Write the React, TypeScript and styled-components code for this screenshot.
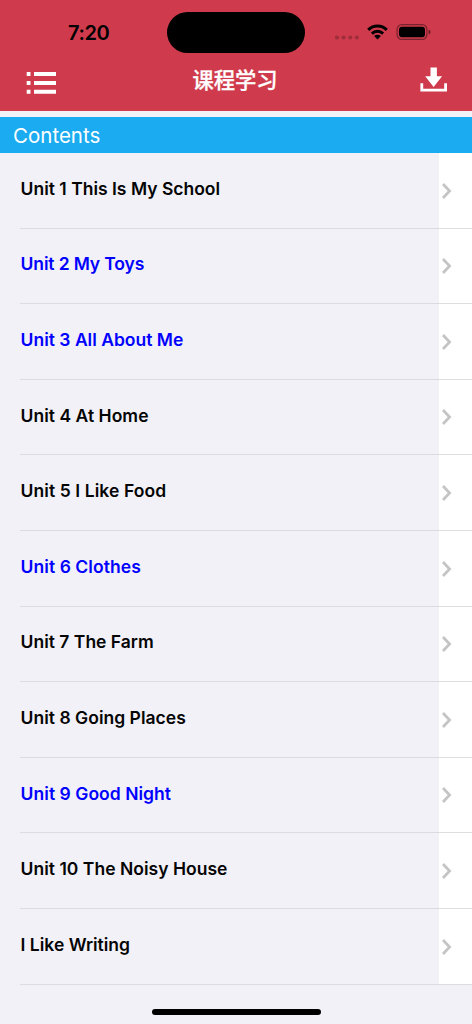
import React from 'react'
import styled, { createGlobalStyle } from 'styled-components'

interface Unit {
  title: string,
  active?: boolean,
  spacing?: number,
}

const units: Unit[] = [
  { title: 'Unit 1 This Is My School' },
  { title: 'Unit 2 My Toys', active: true, spacing: -0.14 },
  { title: 'Unit 3 All About Me', active: true },
  { title: 'Unit 4 At Home', spacing: 0.03 },
  { title: 'Unit 5 I Like Food', spacing: 0.08 },
  { title: 'Unit 6 Clothes', active: true, spacing: 0.06 },
  { title: 'Unit 7 The Farm' },
  { title: 'Unit 8 Going Places', spacing: 0.02 },
  { title: 'Unit 9 Good Night', active: true, spacing: 0.04 },
  { title: 'Unit 10 The Noisy House', spacing: 0.02 },
  { title: 'I Like Writing' },
]

const StatusIcons: React.FC = () => (
  <svg width="96" height="20" viewBox="335 22 96 20" fill="#000">
    <g opacity="0.22">
      <circle cx="337" cy="37.5" r="2.1" />
      <circle cx="343.6" cy="37.5" r="2.1" />
      <circle cx="350.3" cy="37.5" r="2.1" />
      <circle cx="356.9" cy="37.5" r="2.1" />
    </g>
    <g fill="none" stroke="#000" strokeWidth="3">
      <path d="M368.2 29.9a13.2 13.2 0 0 1 18.6 0" />
      <path d="M371.9 33.6a8 8 0 0 1 11.2 0" />
    </g>
    <path d="M377.5 39.4l-3.4-3.4a4.9 4.9 0 0 1 6.8 0z" />
    <rect x="397.1" y="24.6" width="29.8" height="14.8" rx="4.8" fill="none" stroke="#000" strokeOpacity="0.42" strokeWidth="1.2" />
    <rect x="399" y="26.7" width="26" height="10.6" rx="3" />
    <path d="M428.6 29.4c2.6 1 2.6 4.2 0 5.2z" opacity="0.5" />
  </svg>
)

const ListIcon: React.FC = () => (
  <svg width="30" height="22" viewBox="0 0 30 22" fill="#fff">
    <path d="M.7 0h3.8v4H.7zM8 0h22v4H8zM.7 9h3.8v4H.7zM8 9h22v4H8zM.7 17.8h3.8v4H.7zM8 17.8h22v4H8z" />
  </svg>
)

const DownloadIcon: React.FC = () => (
  <svg width="28" height="26" viewBox="420 67 28 26" fill="#fff">
    <path d="M430.5 67.4h6.4v8.8h5.2l-8.5 10.7-8.4-10.7h5.3z" />
    <path d="M420.4 83.2h2.8v5.5h21v-5.5h2.8v8.4h-26.6z" />
  </svg>
)

const Chevron: React.FC = () => (
  <svg width="10" height="16" viewBox="0 0 10 16" fill="none" stroke="#c4c4c6" strokeWidth="2.7">
    <path d="M1 1l6.6 7L1 15" />
  </svg>
)

const App: React.FC = () => {
  return (
    <>
      <GlobalStyle />
      <Screen>
        <Header>
          <StatusBar>
            <Time>7:20</Time>
            <Island />
            <StatusIcons />
          </StatusBar>
          <NavBar>
            <ListIcon />
            <NavTitle>课程学习</NavTitle>
            <DownloadIcon />
          </NavBar>
        </Header>
        <SectionTitle>Contents</SectionTitle>
        <UnitList>
          {units.map((unit) => (
            <UnitRow key={unit.title}>
              <UnitTitle $active={unit.active} $spacing={unit.spacing}>{unit.title}</UnitTitle>
              <Accessory>
                <Chevron />
              </Accessory>
            </UnitRow>
          ))}
        </UnitList>
        <Footer>
          <HomeBar />
        </Footer>
      </Screen>
    </>
  )
}

export default App

const GlobalStyle = createGlobalStyle`
  * {
    box-sizing: border-box;
  }
  body {
    margin: 0;
    background-color: #f2f1f7;
  }
`;
const Screen = styled.div`
  display: flex;
  flex-direction: column;
  width: 472px;
  height: 1024px;
  overflow: hidden;
  background-color: #f2f1f7;
  font-family: Inter, 'Noto Sans CJK SC', sans-serif;
`;
const Header = styled.header`
  height: 111px;
  flex-shrink: 0;
  background-color: #cf3b4c;
`;
const StatusBar = styled.div`
  display: grid;
  grid-template-columns: 69px 138px 96px;
  column-gap: 30px;
  height: 53px;
  padding: 12px 0 0 68px;
  align-items: center;
  svg {
    margin-top: -1px;
  }
`;
const Time = styled.div`
  font-size: 20px;
  font-weight: 600;
  line-height: 24px;
  letter-spacing: -0.4px;
`;
const Island = styled.div`
  width: 138px;
  height: 40.5px;
  border-radius: 21px;
  background-color: #000;
`;
const NavBar = styled.div`
  display: grid;
  grid-template-columns: 30px 1fr 28px;
  height: 55px;
  padding: 0 24px 0 26px;
  align-items: center;
  svg {
    margin-top: 5px;
  }
  svg:last-child {
    margin-top: -1px;
  }
`;
const NavTitle = styled.h1`
  margin: -3px 6px 0 0;
  color: #fff;
  font-family: 'Noto Sans CJK SC', sans-serif;
  font-size: 21.3px;
  font-weight: 500;
  line-height: 30px;
  text-align: center;
  -webkit-text-stroke: 0.3px #fff;
`;
const SectionTitle = styled.h2`
  display: flex;
  align-items: center;
  flex-shrink: 0;
  height: 36px;
  margin: 6px 0 0;
  padding: 0 13px;
  background-color: #1babf0;
  color: #fff;
  font-size: 20.5px;
  font-weight: 400;
`;
const UnitList = styled.ul`
  list-style: none;
  margin: 0;
  padding: 0;
`;
const UnitRow = styled.li`
  display: grid;
  grid-template-columns: 1fr 33.5px;
  height: 75.6px;
  background: linear-gradient(#dcdbe0, #dcdbe0) 20px 100% / 100% 1px no-repeat;
`;
const UnitTitle = styled.div<{ $active?: boolean, $spacing?: number }>`
  padding: 24.9px 0 0 20.6px;
  color: ${props => props.$active ? '#0000ff' : '#050505'};
  font-size: 17.5px;
  font-weight: 600;
  line-height: 22px;
  letter-spacing: ${props => props.$spacing || 0}px;
  white-space: nowrap;
`;
const Accessory = styled.div`
  display: flex;
  align-items: center;
  padding: 0.6px 0 0 3px;
  background-color: #fff;
  border-bottom: 1px solid #dedee0;
`;
const Footer = styled.footer`
  display: flex;
  flex: 1;
  justify-content: center;
  align-items: flex-end;
  padding-bottom: 9px;
`;
const HomeBar = styled.div`
  width: 169px;
  height: 6px;
  border-radius: 3px;
  background-color: #000;
`;
